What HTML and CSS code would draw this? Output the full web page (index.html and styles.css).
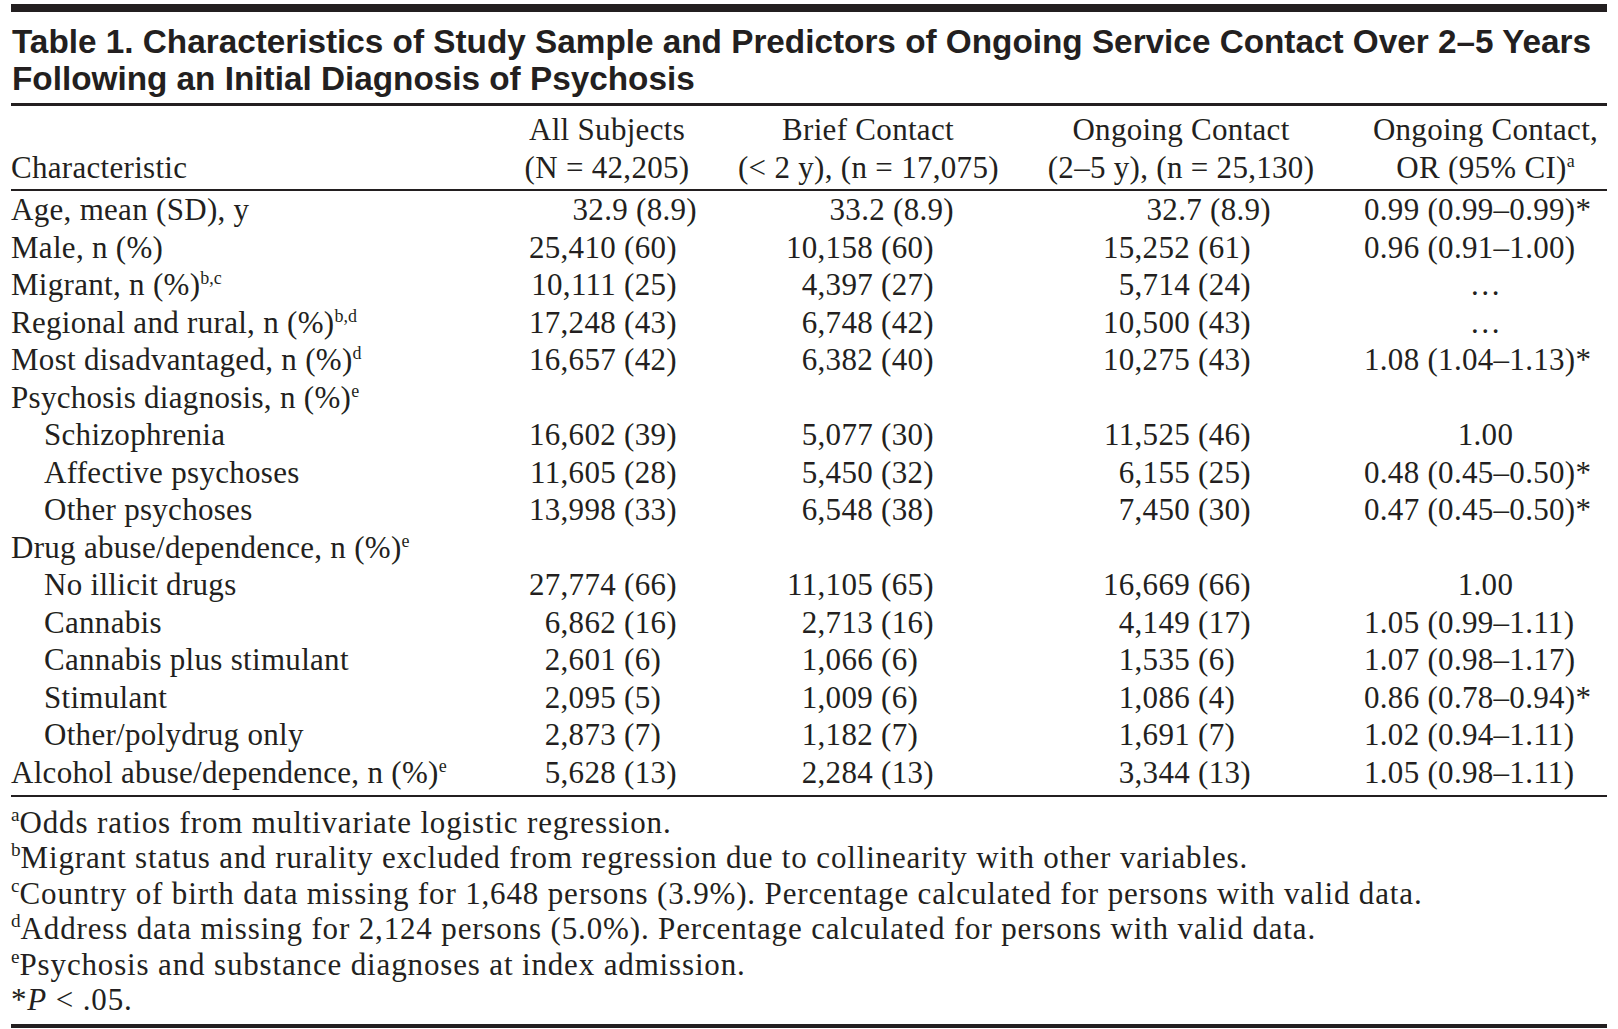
FILE: index.html
```html
<!DOCTYPE html>
<html lang="en">
<head>
<meta charset="utf-8">
<title>Table 1</title>
<link rel="stylesheet" href="styles.css">
</head>
<body>
<div class="page">
  <div class="topbar"></div>
  <h1 class="title">Table 1. Characteristics of Study Sample and Predictors of Ongoing Service Contact Over 2–5 Years Following an Initial Diagnosis of Psychosis</h1>
  <table class="tbl">
    <colgroup>
      <col class="c1"><col class="c2"><col class="c3"><col class="c4"><col class="c5">
    </colgroup>
    <thead>
      <tr>
        <th class="lab">Characteristic</th>
        <th>All Subjects<br>(N = 42,205)</th>
        <th>Brief Contact<br>(&lt; 2 y), (n = 17,075)</th>
        <th>Ongoing Contact<br>(2–5 y), (n = 25,130)</th>
        <th>Ongoing Contact,<br>OR (95% CI)<sup>a</sup></th>
      </tr>
    </thead>
    <tbody>
      <tr class="mean">
        <td class="lab">Age, mean (SD), y</td>
        <td class="v"><span class="n">32.9</span> <span>(8.9)</span></td>
        <td class="v"><span class="n">33.2</span> <span>(8.9)</span></td>
        <td class="v"><span class="n">32.7</span> <span>(8.9)</span></td>
        <td class="or">0.99 (0.99–0.99)*</td>
      </tr>
      <tr>
        <td class="lab">Male, n (%)</td>
        <td class="v"><span class="n">25,410</span> <span>(60)</span></td>
        <td class="v"><span class="n">10,158</span> <span>(60)</span></td>
        <td class="v"><span class="n">15,252</span> <span>(61)</span></td>
        <td class="or">0.96 (0.91–1.00)</td>
      </tr>
      <tr>
        <td class="lab">Migrant, n (%)<sup>b,c</sup></td>
        <td class="v"><span class="n">10,111</span> <span>(25)</span></td>
        <td class="v"><span class="n">4,397</span> <span>(27)</span></td>
        <td class="v"><span class="n">5,714</span> <span>(24)</span></td>
        <td class="or mid">…</td>
      </tr>
      <tr>
        <td class="lab">Regional and rural, n (%)<sup>b,d</sup></td>
        <td class="v"><span class="n">17,248</span> <span>(43)</span></td>
        <td class="v"><span class="n">6,748</span> <span>(42)</span></td>
        <td class="v"><span class="n">10,500</span> <span>(43)</span></td>
        <td class="or mid">…</td>
      </tr>
      <tr>
        <td class="lab">Most disadvantaged, n (%)<sup>d</sup></td>
        <td class="v"><span class="n">16,657</span> <span>(42)</span></td>
        <td class="v"><span class="n">6,382</span> <span>(40)</span></td>
        <td class="v"><span class="n">10,275</span> <span>(43)</span></td>
        <td class="or">1.08 (1.04–1.13)*</td>
      </tr>
      <tr>
        <td class="lab">Psychosis diagnosis, n (%)<sup>e</sup></td>
        <td></td><td></td><td></td><td></td>
      </tr>
      <tr>
        <td class="lab sub">Schizophrenia</td>
        <td class="v"><span class="n">16,602</span> <span>(39)</span></td>
        <td class="v"><span class="n">5,077</span> <span>(30)</span></td>
        <td class="v"><span class="n">11,525</span> <span>(46)</span></td>
        <td class="or mid">1.00</td>
      </tr>
      <tr>
        <td class="lab sub">Affective psychoses</td>
        <td class="v"><span class="n">11,605</span> <span>(28)</span></td>
        <td class="v"><span class="n">5,450</span> <span>(32)</span></td>
        <td class="v"><span class="n">6,155</span> <span>(25)</span></td>
        <td class="or">0.48 (0.45–0.50)*</td>
      </tr>
      <tr>
        <td class="lab sub">Other psychoses</td>
        <td class="v"><span class="n">13,998</span> <span>(33)</span></td>
        <td class="v"><span class="n">6,548</span> <span>(38)</span></td>
        <td class="v"><span class="n">7,450</span> <span>(30)</span></td>
        <td class="or">0.47 (0.45–0.50)*</td>
      </tr>
      <tr>
        <td class="lab">Drug abuse/dependence, n (%)<sup>e</sup></td>
        <td></td><td></td><td></td><td></td>
      </tr>
      <tr>
        <td class="lab sub">No illicit drugs</td>
        <td class="v"><span class="n">27,774</span> <span>(66)</span></td>
        <td class="v"><span class="n">11,105</span> <span>(65)</span></td>
        <td class="v"><span class="n">16,669</span> <span>(66)</span></td>
        <td class="or mid">1.00</td>
      </tr>
      <tr>
        <td class="lab sub">Cannabis</td>
        <td class="v"><span class="n">6,862</span> <span>(16)</span></td>
        <td class="v"><span class="n">2,713</span> <span>(16)</span></td>
        <td class="v"><span class="n">4,149</span> <span>(17)</span></td>
        <td class="or">1.05 (0.99–1.11)</td>
      </tr>
      <tr>
        <td class="lab sub">Cannabis plus stimulant</td>
        <td class="v"><span class="n">2,601</span> <span>(6)</span></td>
        <td class="v"><span class="n">1,066</span> <span>(6)</span></td>
        <td class="v"><span class="n">1,535</span> <span>(6)</span></td>
        <td class="or">1.07 (0.98–1.17)</td>
      </tr>
      <tr>
        <td class="lab sub">Stimulant</td>
        <td class="v"><span class="n">2,095</span> <span>(5)</span></td>
        <td class="v"><span class="n">1,009</span> <span>(6)</span></td>
        <td class="v"><span class="n">1,086</span> <span>(4)</span></td>
        <td class="or">0.86 (0.78–0.94)*</td>
      </tr>
      <tr>
        <td class="lab sub">Other/polydrug only</td>
        <td class="v"><span class="n">2,873</span> <span>(7)</span></td>
        <td class="v"><span class="n">1,182</span> <span>(7)</span></td>
        <td class="v"><span class="n">1,691</span> <span>(7)</span></td>
        <td class="or">1.02 (0.94–1.11)</td>
      </tr>
      <tr class="last">
        <td class="lab">Alcohol abuse/dependence, n (%)<sup>e</sup></td>
        <td class="v"><span class="n">5,628</span> <span>(13)</span></td>
        <td class="v"><span class="n">2,284</span> <span>(13)</span></td>
        <td class="v"><span class="n">3,344</span> <span>(13)</span></td>
        <td class="or">1.05 (0.98–1.11)</td>
      </tr>
    </tbody>
  </table>
  <div class="notes">
    <p><sup>a</sup>Odds ratios from multivariate logistic regression.</p>
    <p><sup>b</sup>Migrant status and rurality excluded from regression due to collinearity with other variables.</p>
    <p><sup>c</sup>Country of birth data missing for 1,648 persons (3.9%). Percentage calculated for persons with valid data.</p>
    <p><sup>d</sup>Address data missing for 2,124 persons (5.0%). Percentage calculated for persons with valid data.</p>
    <p><sup>e</sup>Psychosis and substance diagnoses at index admission.</p>
    <p>*<i>P</i> &lt; .05.</p>
  </div>
</div>
</body>
</html>
```

FILE: styles.css
```css
html, body {
  margin: 0;
  padding: 0;
  background: #ffffff;
}

.page {
  width: 1596px;
  padding: 4px 11px 0 11px;
  color: #231f20;
  font-family: "Liberation Serif", "Times New Roman", serif;
  font-size: 31px;
  letter-spacing: 0.3px;
}

.topbar {
  height: 8px;
  background: #231f20;
}

.title {
  margin: 12px 0 0 0;
  padding: 0 0 6px 1px;
  font-family: "Liberation Sans", Arial, sans-serif;
  font-weight: bold;
  font-size: 33.3px;
  line-height: 36.5px;
  letter-spacing: 0;
  border-bottom: 3px solid #231f20;
}

.tbl {
  width: 1596px;
  table-layout: fixed;
  border-collapse: separate;
  border-spacing: 0;
  line-height: 37.5px;
}

.c1 { width: 465px; }
.c2 { width: 262px; }
.c3 { width: 260px; }
.c4 { width: 366px; }
.c5 { width: 243px; }

.tbl th,
.tbl td {
  padding: 0;
  font-weight: normal;
  white-space: nowrap;
  vertical-align: bottom;
}

.tbl thead th {
  text-align: center;
  padding-top: 5px;
  padding-bottom: 3px;
  border-bottom: 2px solid #231f20;
}

.tbl thead th.lab {
  text-align: left;
}

.tbl td.lab {
  text-align: left;
}

.tbl td.sub {
  padding-left: 33px;
}

.tbl td.v {
  text-align: left;
}

.tbl td.v:nth-child(2) { padding-left: 40px; }
.tbl td.v:nth-child(3) { padding-left: 35px; }
.tbl td.v:nth-child(4) { padding-left: 92px; }

.n {
  display: inline-block;
  width: 100px;
  text-align: right;
}

.mean .n {
  margin-left: 12px;
}

.tbl td.or {
  text-align: left;
}

.tbl td.mid {
  text-align: center;
}

.tbl tr.last td {
  padding-bottom: 4px;
  border-bottom: 2px solid #231f20;
}

sup {
  font-size: 0.58em;
  line-height: 0;
  vertical-align: 0.62em;
  letter-spacing: 0;
}

.notes {
  padding: 8px 0 7px 0;
  border-bottom: 4px solid #231f20;
  line-height: 35.4px;
  letter-spacing: 0.85px;
}

.notes p {
  margin: 0;
  white-space: nowrap;
}

.notes sup {
  font-size: 0.62em;
}
```
